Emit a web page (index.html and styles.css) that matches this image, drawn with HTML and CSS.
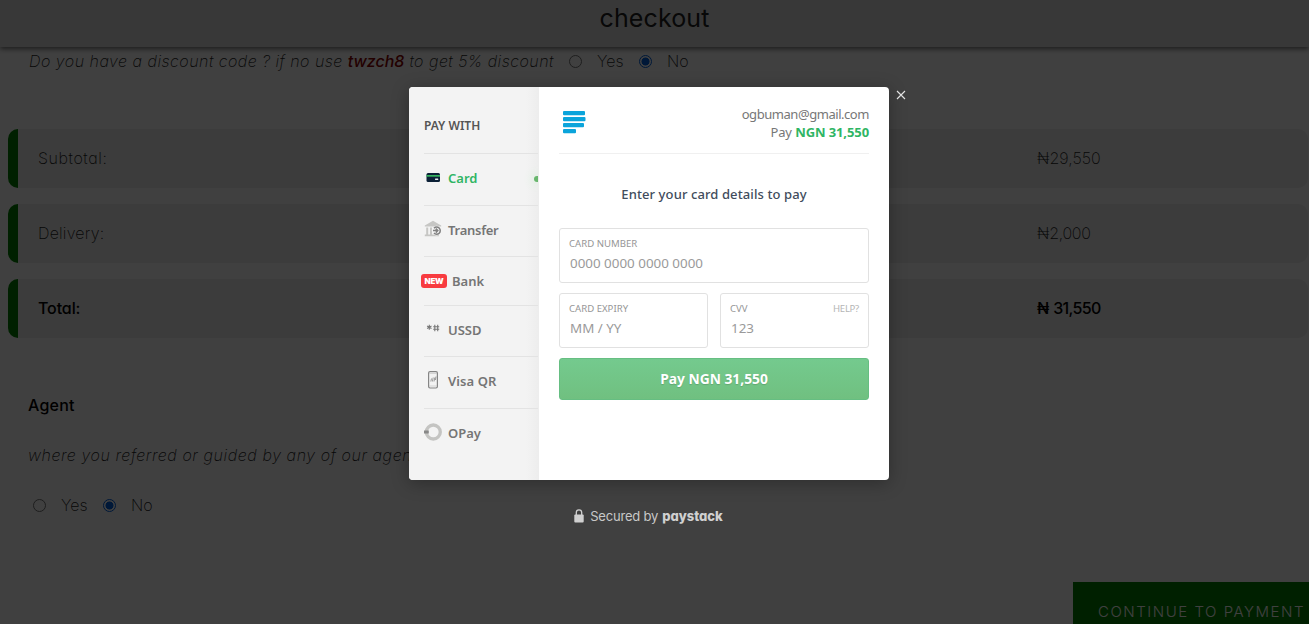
FILE: index.html
```html
<!DOCTYPE html>
<html lang="en">
<head>
<meta charset="utf-8">
<title>checkout</title>
<link rel="stylesheet" href="styles.css">
</head>
<body>
<div class="page">
  <header class="topbar"><h1>checkout</h1></header>
  <section class="discount">
    <em class="question">Do you have a discount code ? if no use <b>twzch8</b> to get 5% discount</em>
    <span class="radio"></span><span class="answer yes">Yes</span>
    <span class="radio checked"></span><span class="answer">No</span>
  </section>
  <section class="totals">
    <div class="total-row"><span class="label">Subtotal:</span><span class="value">₦29,550</span></div>
    <div class="total-row delivery"><span class="label">Delivery:</span><span class="value">₦2,000</span></div>
    <div class="total-row grand"><span class="label">Total:</span><span class="value">₦ 31,550</span></div>
  </section>
  <section class="agent">
    <h2>Agent</h2>
    <em class="agent-question">where you referred or guided by any of our agents ?</em>
    <div class="choices">
      <span class="radio"></span><span class="answer yes">Yes</span>
      <span class="radio checked"></span><span class="answer">No</span>
    </div>
  </section>
  <div class="actions"><button class="continue">CONTINUE TO PAYMENT</button></div>
</div>

<div class="overlay">
  <div class="modal">
    <nav class="channels">
      <div class="channels-title">PAY WITH</div>
      <div class="channel active">
        <svg width="18" height="18" viewBox="0 0 18 18"><rect x="2.5" y="5" width="13.5" height="9" rx="1.5" fill="#0b2036"/><rect x="2.5" y="7" width="13.5" height="1.7" fill="#35b45f"/><rect x="11" y="10.6" width="3.3" height="1.3" rx=".4" fill="#e6ecef"/></svg>
        <span>Card</span><i class="dot"></i>
      </div>
      <div class="channel transfer">
        <svg width="18" height="18" viewBox="0 0 18 18"><path d="M.8 5.6 9 .8l8.2 4.8v1H.8zM2.2 7.5h2v7h-2zM6 7.5h2v7H6zM10 7.5h1.2v7H10zM13.8 7.5h2v3h-2zM.8 14.5h14v1.7H.8z" fill="#c6c6c4"/><circle cx="12.6" cy="10.6" r="4.8" fill="#f3f3f3"/><path d="M10 8.2a3.6 3.6 0 1 1 0 4.9M9 10.6h4.6m-1.8-2 2 2-2 2" fill="none" stroke="#808080" stroke-width="1.5"/></svg>
        <span>Transfer</span>
      </div>
      <div class="channel bank"><b class="new">NEW</b><span>Bank</span></div>
      <div class="channel ussd">
        <svg width="18" height="18" viewBox="0 0 18 18"><path d="M5.3 4.8v5M3.1 6l4.4 2.5M7.5 6 3.1 8.5M10.8 4.8v6.4M13.7 4.8v6.4M9.2 6.8h6M9.2 9.3h6" fill="none" stroke="#777" stroke-width="1.1"/></svg>
        <span>USSD</span>
      </div>
      <div class="channel visa">
        <svg width="18" height="18" viewBox="0 0 18 18"><rect x="4.6" y=".6" width="8.8" height="16.4" rx="1.4" fill="#f3f3f3" stroke="#858585" stroke-width="1.2"/><path d="M5 2.5h8M5 15h8" stroke="#c5c5c5" stroke-width=".7"/><path d="M6.8 10.5 7.5 7.5M8.4 10.5 9.2 6.5M10 10.5l.8-4M11.4 9l.6-3.5" stroke="#858585" stroke-width=".8"/></svg>
        <span>Visa QR</span>
      </div>
      <div class="channel opay">
        <svg width="18" height="18" viewBox="0 0 18 18"><circle cx="9.3" cy="9" r="7" fill="none" stroke="#c4c4c2" stroke-width="3.3"/><rect x="0" y="7.5" width="4.8" height="3" fill="#888"/></svg>
        <span>OPay</span>
      </div>
    </nav>
    <main class="checkout">
      <header class="merchant">
        <svg width="24" height="24" viewBox="0 0 24 24" fill="#0ba4db"><rect x="1" y="1" width="22" height="4.2" rx="1"/><rect x="1" y="7" width="22.5" height="4.2" rx="1"/><rect x="1" y="13" width="21" height="4.2" rx="1"/><rect x="1" y="19" width="13" height="4.2" rx="1"/></svg>
        <div class="customer"><div class="email">ogbuman@gmail.com</div><div class="amount">Pay <b>NGN 31,550</b></div></div>
      </header>
      <p class="prompt">Enter your card details to pay</p>
      <div class="field number"><div class="caption">CARD NUMBER</div><div class="placeholder">0000 0000 0000 0000</div></div>
      <div class="pair">
        <div class="field expiry"><div class="caption">CARD EXPIRY</div><div class="placeholder">MM / YY</div></div>
        <div class="field cvv"><div class="caption">CVV<span class="help">HELP?</span></div><div class="placeholder">123</div></div>
      </div>
      <button class="pay"><span>Pay NGN 31,550</span></button>
    </main>
    <svg class="close" width="10" height="10" viewBox="0 0 10 10"><path d="m1 1 8 8M9 1 1 9" stroke="#e4e4e4" stroke-width="1.1"/></svg>
  </div>
  <div class="secured">
    <svg width="10" height="14" viewBox="0 0 10 14"><path d="M2.3 6V3.6a2.7 2.7 0 0 1 5.4 0V6" fill="none" stroke="#d0d0d0" stroke-width="1.3"/><rect x=".3" y="5.6" width="9.4" height="7.8" rx="1" fill="#d0d0d0"/></svg>
    <span class="by">Secured by</span><b>paystack</b>
  </div>
</div>
</body>
</html>
```
FILE: styles.css
```css
* { box-sizing: border-box; }
body {
  margin: 0;
  height: 624px;
  overflow: hidden;
  background: #fff;
  font: 250 16px/24px Inter, sans-serif;
  font-feature-settings: "cv11";
  color: #1a1a1a;
}
h1, h2, p { margin: 0; }
.page { height: 624px; overflow: hidden; display: flex; flex-direction: column; }
.topbar {
  flex: none;
  height: 47px;
  background: #e0e0e0;
  box-shadow: 0 2px 5px rgba(0, 0, 0, .55);
  display: flex;
  justify-content: center;
}
.topbar h1 { font-size: 25px; line-height: 36px; font-weight: 400; color: #222; letter-spacing: .1px; }
.discount { flex: none; height: 82px; padding: 2px 0 0 29px; display: flex; align-items: flex-start; white-space: nowrap; }
.question { width: 540px; letter-spacing: .49px; }
.question b { font-weight: 500; color: #8b0000; letter-spacing: 0; }
.radio { flex: none; width: 13px; height: 13px; margin-top: 6px; border: 1px solid #767676; border-radius: 50%; }
.radio.checked { border-color: #0060df; background: radial-gradient(circle, #0060df 0 3.7px, transparent 4.3px); }
.answer { margin-left: 15px; }
.answer.yes { width: 42px; }
.totals { flex: none; padding: 0 1px 0 8px; display: flex; flex-direction: column; gap: 16px; }
.total-row {
  height: 59px;
  background: #ededed;
  border-left: 10px solid #008000;
  border-radius: 10px;
  display: flex;
  align-items: center;
  padding: 0 0 2px 20px;
}
.label { width: 999px; letter-spacing: .6px; }
.delivery .label { letter-spacing: .2px; }
.delivery .value { letter-spacing: -.3px; }
.grand { font-weight: 500; color: #000; }
.grand .label { letter-spacing: -.1px; }
.grand .value { letter-spacing: -.65px; word-spacing: 1px; }
.agent { flex: none; padding: 55px 0 0 28px; height: 244px; white-space: nowrap; }
.agent h2 { font-size: 16px; line-height: 24px; font-weight: 500; color: #000; letter-spacing: .2px; }
.agent-question { display: block; margin-top: 26px; letter-spacing: .58px; }
.choices { display: flex; margin-top: 26px; padding-left: 5px; }
.actions { display: flex; justify-content: flex-end; }
.continue {
  border: 0;
  width: 236px;
  height: 60px;
  padding: 0 0 0 25px;
  background: #008000;
  color: #fff;
  font: 300 15px/24px Inter, sans-serif;
  letter-spacing: 1.52px;
  text-align: left;
  white-space: nowrap;
}
.overlay {
  position: absolute;
  inset: 0;
  background: rgba(0, 0, 0, .75);
  display: flex;
  flex-direction: column;
  align-items: center;
  padding-top: 87px;
}
.modal {
  position: relative;
  margin-right: 11px;
  width: 480px;
  height: 393px;
  border-radius: 4px;
  background: #fff;
  display: flex;
  box-shadow: 0 3px 18px rgba(0, 0, 0, .3);
  font: 400 13px/18px "Noto Sans", sans-serif;
}
.channels {
  width: 130px;
  padding-left: 15px;
  border-radius: 4px 0 0 4px;
  background: linear-gradient(90deg, #f3f3f3 90%, #ededed);
  color: #757575;
  font-weight: 600;
}
.channels-title { height: 66px; padding-top: 30px; font-size: 12px; color: #555; }
.channel {
  position: relative;
  height: 52px;
  width: 114px;
  border-top: 1px solid #e3e3e3;
  display: flex;
  align-items: center;
  gap: 6px;
  padding-bottom: 3px;
}
.channel svg { flex: none; margin-top: -2px; }
.active { color: #2fb564; }
.active .dot { position: absolute; right: 0; top: 22px; width: 4px; height: 6px; border-radius: 3px 0 0 3px; background: #68b66d; box-shadow: 0 0 9px 3px #e1f1e3; clip-path: inset(-12px 0 -12px -12px); }
.transfer { height: 51px; letter-spacing: -.25px; }
.bank { height: 49px; padding-bottom: 1px; }
.ussd { height: 51px; }
.visa { letter-spacing: .1px; }
.new {
  width: 26px;
  height: 14px;
  margin-left: -3px;
  margin-right: -1px;
  border-radius: 3px;
  background: #f83b40;
  color: #fff;
  font: 900 8px/14px Inter, sans-serif;
  letter-spacing: -.25px;
  text-align: center;
}
.checkout { width: 350px; padding: 0 20px; }
.merchant { height: 67px; border-bottom: 1px solid #f0f0f0; display: flex; justify-content: space-between; padding: 23px 0 0 3px; }
.customer { margin-top: -5px; text-align: right; color: #777; }
.email { letter-spacing: -.45px; }
.amount { letter-spacing: -.1px; }
.amount b { color: #2fb564; font-weight: 700; }
.prompt { padding-top: 31px; height: 74px; text-align: center; color: #414c5c; font-weight: 500; letter-spacing: .1px; }
.field { height: 55px; border: 1px solid #e1e1e1; border-radius: 3px; padding: 8px 9px; }
.caption { display: flex; justify-content: space-between; height: 13px; font-size: 9.6px; line-height: 13px; color: #969696; }
.help { color: #b5b5b5; letter-spacing: -.3px; }
.placeholder { padding: 4px 0 0 1px; font-size: 13.4px; color: #9a9a9a; }
.pair { display: grid; grid-template-columns: 149px 149px; gap: 12px; margin: 10px 0; }
.pay {
  width: 310px;
  height: 42px;
  border: 1px solid #66be82;
  border-radius: 3px;
  background: linear-gradient(#74ca8e, #70c080);
  color: #fff;
  font: 700 13.8px/18px "Noto Sans", sans-serif;
  text-shadow: 0 1px 1px rgba(0, 0, 0, .15);
}
.close { position: absolute; left: 487px; top: 3px; }
.secured { display: flex; margin: 24px 12px 0 0; align-items: center; color: #c8c8c8; font: 400 13px/24px Inter, sans-serif; }
.by { margin-left: 6px; letter-spacing: -.2px; }
.secured b { margin-left: 4px; font-weight: 800; color: #d0d0d0; font-feature-settings: "cv11"; }
```
